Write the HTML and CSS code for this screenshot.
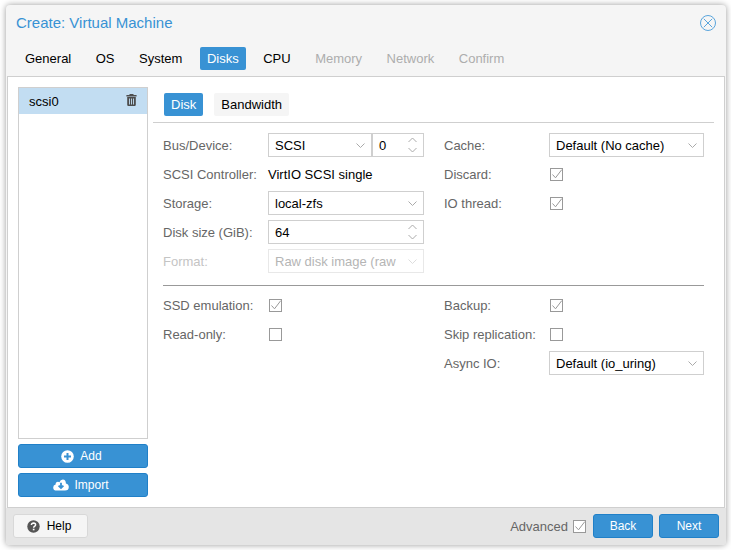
FILE: index.html
```html
<!DOCTYPE html>
<html lang="en">
<head>
    <meta charset="UTF-8">
    <title>Create: Virtual Machine</title>
    <link rel="stylesheet" href="styles.css">
</head>
<body>
    <div class="window">
        <div class="window-header">
            <div class="window-title">Create: Virtual Machine</div>
            <svg class="close-icon" width="18" height="18" viewBox="0 0 18 18">
                <circle cx="9" cy="9" r="7.5" fill="none" stroke="#5aa5dc" stroke-width="1"/>
                <path d="M4.8 4.8 L13.2 13.2 M13.2 4.8 L4.8 13.2" fill="none" stroke="#5aa5dc" stroke-width="1"/>
            </svg>
        </div>
        <div class="tabs">
            <span class="tab">General</span>
            <span class="tab">OS</span>
            <span class="tab">System</span>
            <span class="tab active">Disks</span>
            <span class="tab">CPU</span>
            <span class="tab disabled">Memory</span>
            <span class="tab disabled">Network</span>
            <span class="tab disabled">Confirm</span>
        </div>

        <div class="window-body">
            <div class="side-panel">
                <div class="disk-list">
                    <div class="disk-item">
                        <span>scsi0</span>
                        <svg class="trash-icon" width="11" height="12" viewBox="0 0 11 12">
                            <path d="M3.8 0 H7.2 L7.8 1 H10.6 V2.4 H0.4 V1 H3.2 Z" fill="#4d4d4d"/>
                            <path fill-rule="evenodd" d="M1.2 3 H9.8 V10.8 Q9.8 12 8.6 12 H2.4 Q1.2 12 1.2 10.8 Z M3 4.4 V10.6 H3.9 V4.4 Z M5.05 4.4 V10.6 H5.95 V4.4 Z M7.1 4.4 V10.6 H8 V4.4 Z" fill="#4d4d4d"/>
                        </svg>
                    </div>
                </div>
                <button class="btn side-btn">
                    <svg width="13" height="13" viewBox="0 0 13 13">
                        <circle cx="6.5" cy="6.5" r="6.3" fill="#fff"/>
                        <path d="M3 6.5 H10 M6.5 3 V10" stroke="#3892d4" stroke-width="2"/>
                    </svg>
                    <span>Add</span>
                </button>
                <button class="btn side-btn import-btn">
                    <svg width="16" height="12" viewBox="0 0 16 12">
                        <path d="M4 11.6 Q0.2 11.6 0.2 8.4 Q0.2 6 2.6 5.4 Q2.6 2.8 5 2.8 Q5.8 2.8 6.4 3.2 Q7.4 0.6 9.8 0.6 Q12.8 0.6 12.9 4.4 Q15.8 5 15.8 8 Q15.8 11.6 12 11.6 Z" fill="#fff"/>
                        <path d="M8 3.8 V8.6 M5.6 6.6 L8 9 L10.4 6.6" fill="none" stroke="#3892d4" stroke-width="1.8"/>
                    </svg>
                    <span>Import</span>
                </button>
            </div>

            <div class="content">
                <div class="sub-tabs">
                    <span class="sub-tab active">Disk</span>
                    <span class="sub-tab">Bandwidth</span>
                </div>

                <div class="form">
                    <div class="form-columns">
                        <div class="form-col">
                            <div class="form-row">
                                <label>Bus/Device:</label>
                                <div class="field-pair">
                                    <div class="field bus-field">
                                        <span class="field-text">SCSI</span>
                                        <svg class="chevron" width="9" height="5" viewBox="0 0 9 5"><path d="M0.5 0.5 L4.5 4.5 L8.5 0.5" fill="none" stroke="#aaa"/></svg>
                                    </div>
                                    <div class="field device-field">
                                        <span class="field-text">0</span>
                                        <svg class="spinner" width="9" height="16" viewBox="0 0 9 16"><path d="M0.5 5 L4.5 1 L8.5 5 M0.5 11 L4.5 15 L8.5 11" fill="none" stroke="#aaa"/></svg>
                                    </div>
                                </div>
                            </div>
                            <div class="form-row">
                                <label>SCSI Controller:</label>
                                <span class="field-value">VirtIO SCSI single</span>
                            </div>
                            <div class="form-row">
                                <label>Storage:</label>
                                <div class="field">
                                    <span class="field-text">local-zfs</span>
                                    <svg class="chevron" width="9" height="5" viewBox="0 0 9 5"><path d="M0.5 0.5 L4.5 4.5 L8.5 0.5" fill="none" stroke="#aaa"/></svg>
                                </div>
                            </div>
                            <div class="form-row">
                                <label>Disk size (GiB):</label>
                                <div class="field">
                                    <span class="field-text">64</span>
                                    <svg class="spinner" width="9" height="16" viewBox="0 0 9 16"><path d="M0.5 5 L4.5 1 L8.5 5 M0.5 11 L4.5 15 L8.5 11" fill="none" stroke="#aaa"/></svg>
                                </div>
                            </div>
                            <div class="form-row disabled">
                                <label>Format:</label>
                                <div class="field">
                                    <span class="field-text">Raw disk image (raw</span>
                                    <svg class="chevron" width="9" height="5" viewBox="0 0 9 5"><path d="M0.5 0.5 L4.5 4.5 L8.5 0.5" fill="none" stroke="#ddd"/></svg>
                                </div>
                            </div>
                        </div>
                        <div class="form-col">
                            <div class="form-row">
                                <label>Cache:</label>
                                <div class="field">
                                    <span class="field-text">Default (No cache)</span>
                                    <svg class="chevron" width="9" height="5" viewBox="0 0 9 5"><path d="M0.5 0.5 L4.5 4.5 L8.5 0.5" fill="none" stroke="#aaa"/></svg>
                                </div>
                            </div>
                            <div class="form-row">
                                <label>Discard:</label>
                                <span class="checkbox"><svg width="13" height="13" viewBox="0 0 13 13"><path d="M2.5 6.5 L5.5 9.8 L11.8 1.6" fill="none" stroke="#999"/></svg></span>
                            </div>
                            <div class="form-row">
                                <label>IO thread:</label>
                                <span class="checkbox"><svg width="13" height="13" viewBox="0 0 13 13"><path d="M2.5 6.5 L5.5 9.8 L11.8 1.6" fill="none" stroke="#999"/></svg></span>
                            </div>
                        </div>
                    </div>

                    <hr class="divider">

                    <div class="form-columns">
                        <div class="form-col">
                            <div class="form-row">
                                <label>SSD emulation:</label>
                                <span class="checkbox"><svg width="13" height="13" viewBox="0 0 13 13"><path d="M2.5 6.5 L5.5 9.8 L11.8 1.6" fill="none" stroke="#999"/></svg></span>
                            </div>
                            <div class="form-row">
                                <label>Read-only:</label>
                                <span class="checkbox"></span>
                            </div>
                        </div>
                        <div class="form-col">
                            <div class="form-row">
                                <label>Backup:</label>
                                <span class="checkbox"><svg width="13" height="13" viewBox="0 0 13 13"><path d="M2.5 6.5 L5.5 9.8 L11.8 1.6" fill="none" stroke="#999"/></svg></span>
                            </div>
                            <div class="form-row">
                                <label>Skip replication:</label>
                                <span class="checkbox"></span>
                            </div>
                            <div class="form-row">
                                <label>Async IO:</label>
                                <div class="field">
                                    <span class="field-text">Default (io_uring)</span>
                                    <svg class="chevron" width="9" height="5" viewBox="0 0 9 5"><path d="M0.5 0.5 L4.5 4.5 L8.5 0.5" fill="none" stroke="#aaa"/></svg>
                                </div>
                            </div>
                        </div>
                    </div>
                </div>
            </div>
        </div>

        <div class="window-footer">
            <button class="help-btn">
                <svg width="13" height="13" viewBox="0 0 13 13">
                    <circle cx="6.5" cy="6.5" r="6.2" fill="#555"/>
                    <path d="M4.4 5 Q4.6 3.1 6.6 3.1 Q8.6 3.2 8.6 4.8 Q8.6 5.8 7.5 6.4 Q6.7 6.9 6.7 7.7" fill="none" stroke="#fff" stroke-width="1.5"/>
                    <rect x="5.8" y="8.7" width="1.7" height="1.6" fill="#fff"/>
                </svg>
                <span>Help</span>
            </button>
            <div class="footer-right">
                <span class="advanced-label">Advanced</span>
                <span class="checkbox advanced-check"><svg width="13" height="13" viewBox="0 0 13 13"><path d="M2.5 6.5 L5.5 9.8 L11.8 1.6" fill="none" stroke="#999"/></svg></span>
                <button class="btn nav-btn back-btn">Back</button>
                <button class="btn nav-btn">Next</button>
            </div>
        </div>
    </div>
</body>
</html>
```

FILE: styles.css
```css
* {
    box-sizing: border-box;
}
body {
    margin: 0;
    padding: 5px 5px 5px 6px;
    height: 550px;
    overflow: hidden;
    background-color: #fff;
    font-family: "Liberation Sans", Arial, sans-serif;
    font-size: 13px;
    color: #000;
}
.window {
    display: flex;
    flex-direction: column;
    width: 720px;
    height: 540px;
    background-color: #f5f5f5;
    border-radius: 4px;
    box-shadow: 0 0 6px rgba(0, 0, 0, 0.4);
    overflow: hidden;
}
.window-header {
    display: flex;
    justify-content: space-between;
    align-items: center;
    height: 36px;
    padding: 0 9px 0 10px;
}
.window-title {
    margin-bottom: 2px;
    font-size: 15px;
    color: #3892d4;
}
.tabs {
    display: flex;
    height: 35px;
    padding: 6px 0 0 12px;
    gap: 10.5px;
}
.tab {
    height: 23px;
    padding: 0 7px;
    line-height: 23px;
    border-radius: 2px;
}
.tab.active {
    background-color: #3892d4;
    color: #fff;
}
.tab.disabled {
    color: #adadad;
}

.window-body {
    display: flex;
    flex: 1;
    margin: 0 1px;
    background-color: #fff;
    border: 1px solid #cfcfcf;
}
.side-panel {
    display: flex;
    flex-direction: column;
    width: 130px;
    margin: 10px 0 10px 10px;
    gap: 5px;
    flex-shrink: 0;
}
.disk-list {
    flex: 1;
    border: 1px solid #cfcfcf;
}
.disk-item {
    display: flex;
    justify-content: space-between;
    align-items: center;
    height: 26px;
    padding: 0 10px;
    background-color: #c2ddf2;
}
.trash-icon {
    margin-bottom: 2px;
}
.btn {
    border: 1px solid #2080c8;
    border-radius: 3px;
    background-color: #3892d4;
    color: #fff;
    font-family: inherit;
    font-size: 12px;
}
.side-btn {
    display: flex;
    justify-content: center;
    align-items: center;
    gap: 6px;
    height: 24px;
    padding: 0 3px 0 0;
}
.import-btn {
    gap: 5px;
    padding-right: 4px;
}

.content {
    flex: 1;
    padding: 0 10px 0 5px;
}
.sub-tabs {
    display: flex;
    gap: 11px;
    height: 46px;
    padding: 16px 0 0 11px;
    border-bottom: 1px solid #cfcfcf;
}
.sub-tab {
    height: 23px;
    padding: 0 7px;
    line-height: 23px;
    background-color: #f5f5f5;
    border-radius: 2px;
}
.sub-tab.active {
    background-color: #3892d4;
    color: #fff;
}
.form {
    padding: 10px 0 0 10px;
    width: 551px;
}
.form-columns {
    display: flex;
    gap: 20px;
}
.form-col {
    display: flex;
    flex-direction: column;
    gap: 5px;
    width: 261px;
}
.form-col + .form-col {
    width: 260px;
}
.form-row {
    display: flex;
    align-items: center;
    height: 24px;
}
.form-row label {
    width: 105px;
    flex-shrink: 0;
    color: #666;
}
.form-row.disabled label {
    color: #c4c4c4;
}
.field-pair {
    display: flex;
    flex: 1;
}
.field {
    display: flex;
    justify-content: space-between;
    align-items: center;
    flex: 1;
    height: 24px;
    padding: 0 6px;
    border: 1px solid #cfcfcf;
    background-color: #fff;
}
.bus-field {
    flex: none;
    width: 104px;
}
.device-field {
    flex: none;
    width: 52px;
}
.form-row.disabled .field {
    border-color: #e8e8e8;
    color: #b5b5b5;
}
.checkbox {
    display: block;
    width: 13px;
    height: 13px;
    margin: 1px 0 0 1px;
    flex-shrink: 0;
    border: 1px solid #999;
    background-color: #fff;
}
.checkbox svg {
    display: block;
    margin: -1px;
}
.divider {
    margin: 12px 0 7px 0;
    border: none;
    border-top: 1px solid #999;
}

.window-footer {
    display: flex;
    justify-content: space-between;
    align-items: center;
    height: 37px;
    padding: 0 7px 1px 7px;
    background-color: #e5e5e5;
}
.help-btn {
    display: flex;
    align-items: center;
    justify-content: center;
    gap: 7px;
    width: 75px;
    height: 24px;
    padding: 0 3px 0 0;
    border: 1px solid #d8d8d8;
    border-radius: 3px;
    background-color: #f5f5f5;
    font-family: inherit;
    font-size: 12px;
    color: #000;
}
.footer-right {
    display: flex;
    align-items: center;
}
.advanced-label {
    margin-right: 5px;
    color: #666;
}
.advanced-check {
    margin: 0;
}
.nav-btn {
    width: 60px;
    height: 24px;
    padding: 0;
}
.back-btn {
    margin: 0 6px 0 7px;
}
```
